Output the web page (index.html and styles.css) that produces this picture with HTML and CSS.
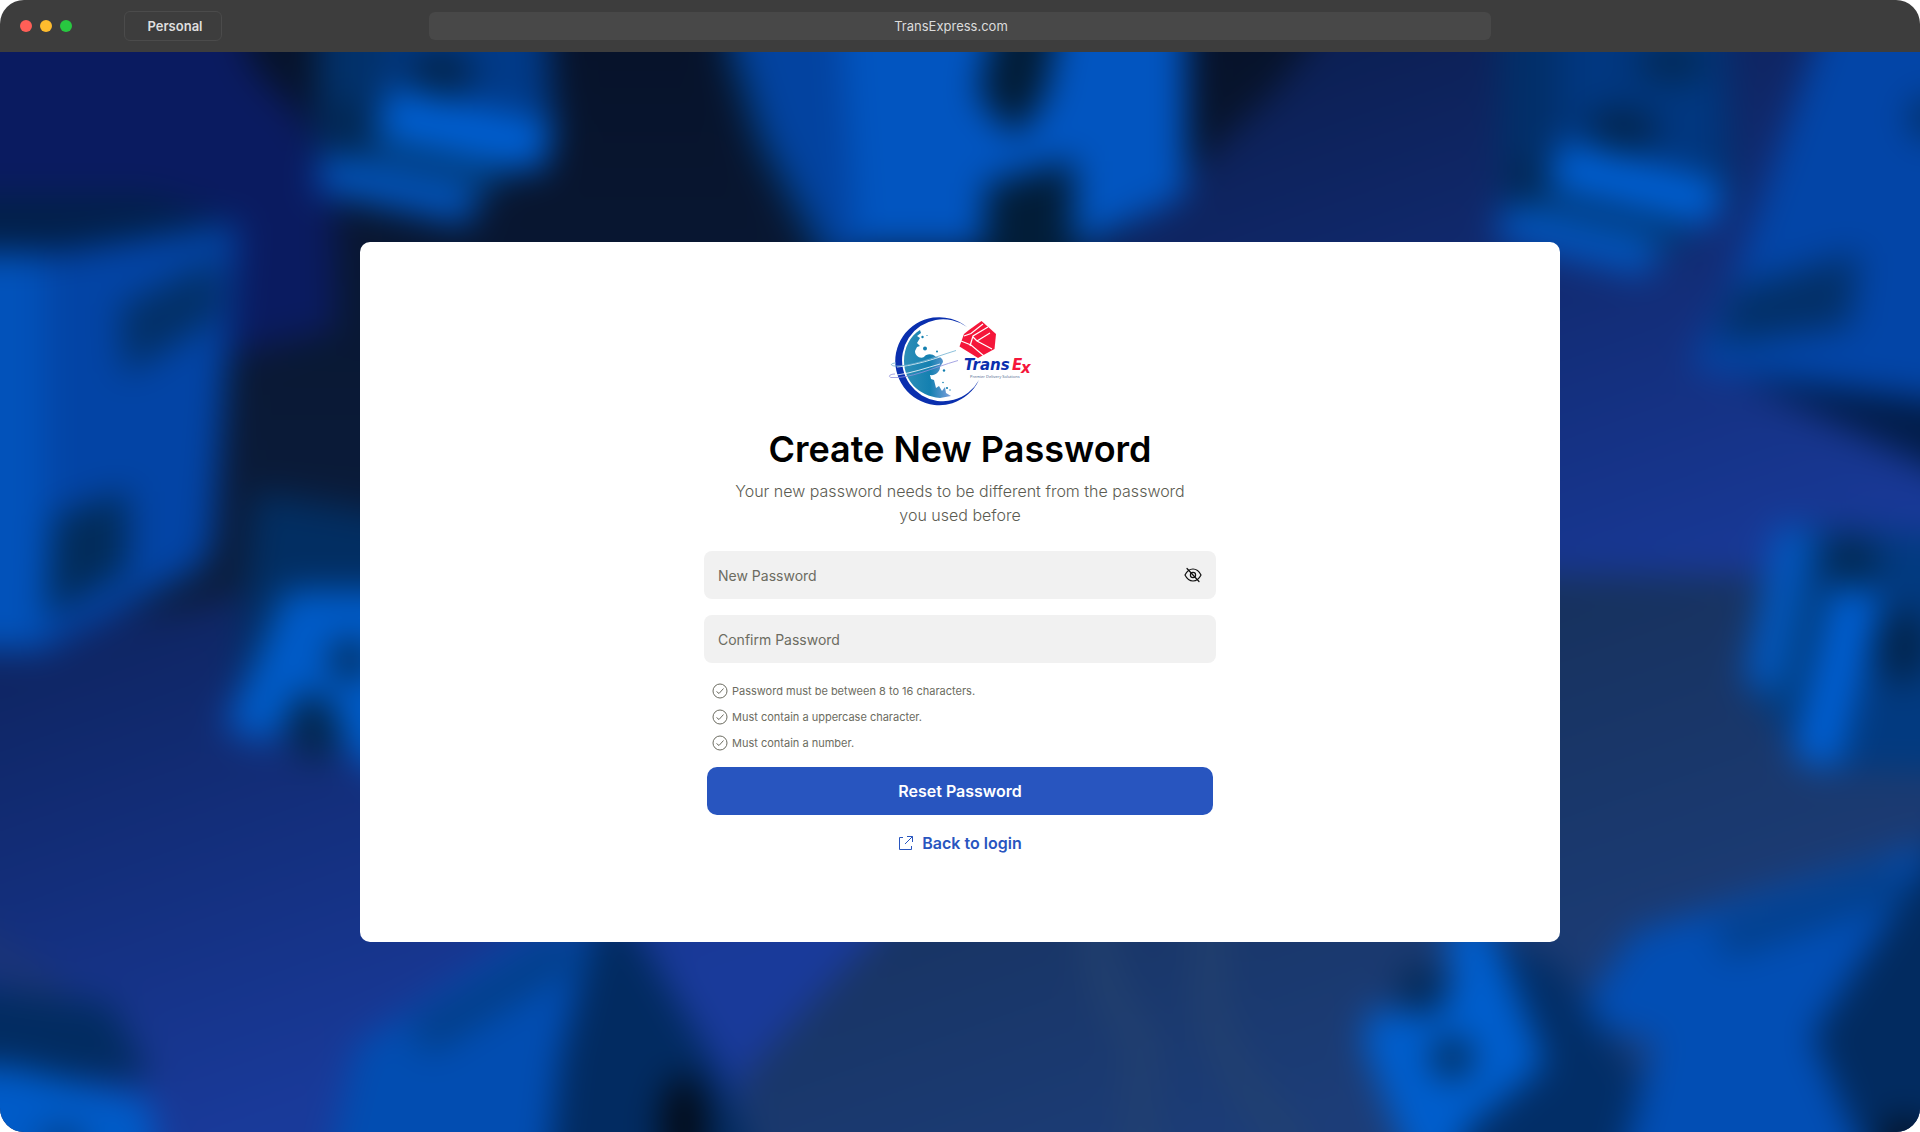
FILE: index.html
```html
<!DOCTYPE html>
<html lang="en">
<head>
    <meta charset="UTF-8">
    <meta name="viewport" content="width=device-width, initial-scale=1.0">
    <title>TransExpress - Create New Password</title>
    <link rel="stylesheet" href="styles.css">
</head>
<body>
    <div class="window">
        <header class="titlebar">
            <div class="titlebar-left">
                <span class="dot dot-red"></span>
                <span class="dot dot-yellow"></span>
                <span class="dot dot-green"></span>
                <button type="button" class="profile">Personal</button>
            </div>
            <div class="address">TransExpress.com</div>
        </header>

        <main class="page">
            <!-- Blurred parcels backdrop -->
            <svg class="backdrop" viewBox="0 52 1920 1080" preserveAspectRatio="xMidYMid slice" aria-hidden="true">
                <defs>
                    <filter id="soft" filterUnits="userSpaceOnUse" x="-100" y="-50" width="2120" height="1282" color-interpolation-filters="sRGB">
                        <feGaussianBlur stdDeviation="17"/>
                    </filter>
                    <linearGradient id="night" gradientUnits="userSpaceOnUse" x1="0" y1="52" x2="0" y2="650">
                        <stop offset="0" stop-color="#07132b"/>
                        <stop offset="1" stop-color="#0c1e3e"/>
                    </linearGradient>
                    <linearGradient id="royal" gradientUnits="userSpaceOnUse" x1="165" y1="470" x2="380" y2="1081">
                        <stop offset="0" stop-color="#0c2055"/>
                        <stop offset="1" stop-color="#193a9a"/>
                    </linearGradient>
                    <linearGradient id="slate" gradientUnits="userSpaceOnUse" x1="360" y1="1026" x2="495" y2="1410">
                        <stop offset="0" stop-color="#17325f"/>
                        <stop offset="1" stop-color="#1c3d78"/>
                    </linearGradient>
                </defs>
                <g filter="url(#soft)">
                    <rect x="-100" y="-50" width="2120" height="1282" fill="url(#night)"/>
                    <path d="M1350 -10L1275 90L1110 250L600 500L180 610L-80 620V1240H2020V-10Z" fill="url(#royal)"/>
                    <path d="M2020 575H1500L1100 700L870 942L740 1080V1240H2020Z" fill="url(#slate)"/>
                    <path d="M-80 -10H225L255 70L305 120L335 200V330L240 352H-80Z" fill="#0a1b60"/>
                    <path d="M1095 900Q1095 990 1140 1040V1240M1210 900V1000Q1220 1070 1300 1150" fill="none" stroke="#24426f" stroke-width="28" opacity=".8"/>
                    <path d="M-40 930L60 1000" stroke="#1b3576" stroke-width="30"/>

                    <!-- left box -->
                    <path d="M-80 195H150L238 222L60 260H-80Z" fill="#02204a"/>
                    <path d="M-80 252H60L238 222L212 545L200 568L45 650H-80Z" fill="#0344a5"/>
                    <path d="M-80 254H30L45 262V650H-80Z" fill="#0252ba"/>
                    <path d="M120 306L220 258V316L124 376Z" fill="#033067"/>
                    <path d="M54 516L128 490V570L46 618Z" fill="#022c5a"/>

                    <!-- top left box -->
                    <path d="M318 0H545L556 130L490 195L318 165Z" fill="#02316a"/>
                    <path d="M390 0H548V120L390 90Z" fill="#013a88"/>
                    <ellipse cx="440" cy="74" rx="34" ry="27" fill="#022650"/>
                    <ellipse cx="350" cy="127" rx="20" ry="28" fill="#022650"/>
                    <path d="M370 147L500 177" stroke="#023e7c" stroke-width="22"/>
                    <path d="M383 112L548 148" stroke="#005fd2" stroke-width="50"/>
                    <path d="M320 173L474 207" stroke="#0254bc" stroke-width="38"/>

                    <!-- top centre box -->
                    <path d="M720 -10H860V260H825L745 100Z" fill="#0343a0"/>
                    <path d="M728 40L760 140L830 270" fill="none" stroke="#022f62" stroke-width="18"/>
                    <path d="M838 -10H1186V195L1080 248H856Z" fill="#0255c0"/>
                    <path d="M1000 -10H1066L1046 95L1016 138L978 96Z" fill="#021d38"/>
                    <path d="M986 184L1074 160V280H982Z" fill="#021d38"/>

                    <!-- top right box -->
                    <path d="M1500 0H1725L1735 200L1660 258L1500 220Z" fill="#022f69"/>
                    <path d="M1560 0H1722V170L1560 140Z" fill="#013780"/>
                    <ellipse cx="1672" cy="62" rx="36" ry="22" fill="#022a58"/>
                    <ellipse cx="1622" cy="130" rx="36" ry="23" fill="#022650"/>
                    <ellipse cx="1529" cy="184" rx="18" ry="25" fill="#022650"/>
                    <path d="M1530 202L1680 242" stroke="#023e7c" stroke-width="20"/>
                    <path d="M1554 164L1718 204" stroke="#005fd2" stroke-width="48"/>
                    <path d="M1500 222L1654 259" stroke="#0254bc" stroke-width="38"/>

                    <!-- right box -->
                    <path d="M1835 -10H2020V420L1690 368L1735 275Z" fill="#0345a7"/>
                    <path d="M1732 290L1860 252L1850 326L1716 346Z" fill="#033068"/>
                    <path d="M1735 375L2020 410V510Z" fill="#021d4a"/>
                    <circle cx="1930" cy="118" r="22" fill="#033068"/>

                    <!-- right middle box -->
                    <path d="M1785 525L2020 540V775L1810 768L1750 690Z" fill="#023a80"/>
                    <circle cx="1851" cy="562" r="28" fill="#022a55"/>
                    <path d="M1812 590L1780 710" stroke="#023e7c" stroke-width="24"/>
                    <ellipse cx="1902" cy="646" rx="28" ry="38" fill="#022650"/>
                    <path d="M1796 528L1762 687" stroke="#0257be" stroke-width="38"/>
                    <path d="M1858 590L1815 764" stroke="#005fd2" stroke-width="46"/>

                    <!-- left middle box -->
                    <path d="M255 492L420 520V760L232 725Z" fill="#022e62"/>
                    <path d="M285 590H420V790L350 756L338 720L300 690L272 744L224 728L260 650Z" fill="#005bc8"/>
                    <ellipse cx="316" cy="728" rx="22" ry="34" fill="#03264c"/>
                    <circle cx="350" cy="660" r="22" fill="#033062"/>

                    <!-- bottom left box -->
                    <path d="M-80 980L110 1004L152 1080H-80Z" fill="#022c61"/>
                    <path d="M-80 1066H10L150 1100L165 1240H-80Z" fill="#005bc8"/>
                    <ellipse cx="62" cy="1145" rx="25" ry="20" fill="#03418c"/>

                    <!-- bottom centre box -->
                    <path d="M310 1240L356 1045L540 930H610L540 1240Z" fill="#024db1"/>
                    <path d="M418 1040L570 948" stroke="#033e88" stroke-width="36"/>
                    <path d="M600 900L635 930L722 1076L790 1240H540L560 1060Z" fill="#022b61"/>
                    <ellipse cx="684" cy="1125" rx="24" ry="50" fill="#030c1a"/>

                    <!-- bottom right letter box -->
                    <path d="M1480 930L1560 965L1640 1080V1240H1440Z" fill="#022e67"/>
                    <path d="M1445 920H1488L1545 1065L1465 1130L1440 1240L1362 1040L1372 1008L1435 1016L1452 985Z" fill="#005ecd"/>
                    <circle cx="1422" cy="990" r="25" fill="#032a58"/>
                    <circle cx="1452" cy="1058" r="22" fill="#033062"/>

                    <!-- bottom right box -->
                    <path d="M1635 932L1920 848L2020 830V1240H1600L1655 1040L1605 1030L1585 1005Z" fill="#024eb4"/>
                    <path d="M1720 942L1900 880" stroke="#033f8a" stroke-width="36"/>
                    <path d="M2020 720L1920 872L1812 1036L1900 1240H2020Z" fill="#022b60"/>
                    <ellipse cx="1905" cy="1140" rx="25" ry="22" fill="#031226"/>
                </g>
            </svg>

            <section class="card">
                <svg class="logo" viewBox="17 14 146 94" role="img" aria-label="TransEx Premier Delivery Solutions">
                    <defs>
                        <linearGradient id="globe" x1="0" y1="0" x2="1" y2="0">
                            <stop offset="0" stop-color="#2e8fb8"/>
                            <stop offset=".55" stop-color="#1480b0"/>
                            <stop offset="1" stop-color="#7c9fdc"/>
                        </linearGradient>
                    </defs>
                    <path d="M97 27A44 44 0 1 0 109 80A41 41 0 1 1 97 27Z" fill="#0a2fae"/>
                    <path d="M50 30C40 36 34 48 34 61C34 80 48 96 70 98L81 96L76 93L75 87L72 91L69 86L66 88L64 80L61 79L60 75C65 76 70 72 70 67L73 62C73 58 69 56 66 57C62 53 56 54 54 57C50 59 45 56 45 51L47 47L50 46L47 43L50 38L47 36L51 33Z" fill="url(#globe)"/>
                    <g fill="#1480b0">
                        <circle cx="55" cy="48.500" r="2"/>
                        <circle cx="52.500" cy="37" r="1.200"/>
                        <circle cx="57" cy="35.500" r=".6"/>
                        <circle cx="67" cy="51.500" r="1"/>
                        <circle cx="74" cy="70.500" r="1.200"/>
                        <circle cx="73" cy="82.500" r=".8"/>
                        <circle cx="77" cy="88" r="1.100"/>
                        <circle cx="80" cy="90" r=".7"/>
                    </g>
                    <path d="M27 67C40 66 58 61 70 57M27 75C42 73 56 68 70 64" fill="none" stroke="#fff" stroke-width=".8"/>
                    <path d="M86 50.500C62 58 40 67 24 66C19 65 22 63 26 63" fill="none" stroke="#6fb0d0" stroke-width=".8"/>
                    <path d="M88 60.500C62 68 40 79 21 77.500C17 76 21 74 25 74" fill="none" stroke="#8f8fdc" stroke-width=".8"/>
                    <path d="M111.500 21L126 34L124.500 49L108 58L89.500 46.500L94 34L99 30Z" fill="#f5163a"/>
                    <path d="M94 36L101 33.500L113 24M100 46L103 36L118 27M103 37L107 41L122 49M91 41L101 45L114 56M107 41L120 33" fill="none" stroke="#fff" stroke-width="1.200"/>
                    <text class="logo-name" x="94" y="70">Trans</text>
                    <text class="logo-name logo-red" x="142" y="70">E</text>
                    <text class="logo-name logo-red" x="151" y="73">x</text>
                    <text class="logo-tagline" x="100" y="78">Premier Delivery Solutions</text>
                </svg>

                <h1>Create New Password</h1>
                <p class="subtitle">Your new password needs to be different from the password you used before</p>

                <form class="reset-form" id="resetForm">
                    <div class="field">
                        <input type="password" id="newPassword" placeholder="New Password" aria-label="New Password">
                        <button type="button" class="toggle" aria-label="Show password">
                            <svg viewBox="0 0 18 16" width="18" height="16" fill="none" stroke="#111" stroke-width="1.200" stroke-linecap="round">
                                <path d="M1 8C3 4 6 2 9 2S15 4 17 8C15 12 12 14 9 14S3 12 1 8Z"/>
                                <circle cx="9" cy="8" r="2.600"/>
                                <path d="M3 1.500L15 14.500"/>
                            </svg>
                        </button>
                    </div>
                    <div class="field">
                        <input type="password" id="confirmPassword" placeholder="Confirm Password" aria-label="Confirm Password">
                    </div>

                    <ul class="rules">
                        <li>
                            <svg class="check" viewBox="0 0 16 16"><circle cx="8" cy="8" r="7"/><path d="M4.500 8.500L7 10.500L11.500 5.500"/></svg>
                            Password must be between 8 to 16 characters.
                        </li>
                        <li>
                            <svg class="check" viewBox="0 0 16 16"><circle cx="8" cy="8" r="7"/><path d="M4.500 8.500L7 10.500L11.500 5.500"/></svg>
                            Must contain a uppercase character.
                        </li>
                        <li>
                            <svg class="check" viewBox="0 0 16 16"><circle cx="8" cy="8" r="7"/><path d="M4.500 8.500L7 10.500L11.500 5.500"/></svg>
                            Must contain a number.
                        </li>
                    </ul>

                    <button type="submit" class="btn">Reset Password</button>
                </form>

                <a class="back-link" href="#">
                    <svg viewBox="0 0 16 16" width="16" height="16" fill="none" stroke="#2855bf" stroke-width="1">
                        <path d="M5 2.500H1.500V14.500H13.500V11M9 1.500H14.500V7M14.500 1.500L7 9"/>
                    </svg>
                    Back to login
                </a>
            </section>
        </main>
    </div>
</body>
</html>
```
FILE: styles.css
```css
* {
    margin: 0;
    padding: 0;
    box-sizing: border-box;
}

body {
    font-family: Inter, 'Liberation Sans', sans-serif;
    background: white;
}

.window {
    display: flex;
    flex-direction: column;
    min-height: 100vh;
    border-radius: 24px;
    overflow: hidden;
}

.titlebar {
    display: grid;
    grid-template-columns: 429px 1fr 429px;
    align-items: center;
    height: 52px;
    background: #3d3d3d;
}

.titlebar-left {
    display: flex;
    align-items: center;
    gap: 8px;
    padding-left: 20px;
}

.dot {
    width: 12px;
    height: 12px;
    border-radius: 50%;
}

.dot-red {
    background: #ff5f57;
}

.dot-yellow {
    background: #febc2e;
}

.dot-green {
    background: #28c840;
}

.profile {
    width: 98px;
    height: 30px;
    margin-left: 44px;
    padding-left: 4px;
    background: none;
    border: 1px solid #4b4b4b;
    border-radius: 6px;
    color: #dfdfdf;
    font-family: inherit;
    font-size: 13px;
    font-weight: 600;
}

.address {
    height: 28px;
    padding-right: 18px;
    background: #484848;
    border-radius: 6px;
    color: #dcdcdc;
    font-size: 13px;
    line-height: 28px;
    text-align: center;
}

.page {
    position: relative;
    flex: 1;
    display: flex;
    align-items: center;
    justify-content: center;
    padding: 40px 20px;
    background: #0c2055;
}

.backdrop {
    position: absolute;
    inset: 0;
    width: 100%;
    height: 100%;
}

.card {
    position: relative;
    display: flex;
    flex-direction: column;
    align-items: center;
    width: 100%;
    max-width: 1200px;
    min-height: 700px;
    padding: 72px 24px;
    background: white;
    border-radius: 10px;
}

.logo {
    width: 146px;
    height: 94px;
}

.logo-name {
    font-family: 'DejaVu Sans', sans-serif;
    font-size: 15px;
    font-weight: bold;
    font-style: italic;
    fill: #0a2fae;
}

.logo-red {
    fill: #f5163a;
}

.logo-tagline {
    font-family: 'Noto Sans', sans-serif;
    font-size: 4px;
    fill: #4f6a92;
}

h1 {
    margin-top: 19px;
    font-size: 36px;
    font-weight: 600;
    line-height: 44px;
    color: black;
}

.subtitle {
    max-width: 460px;
    margin-top: 8px;
    font-size: 16px;
    font-weight: 300;
    line-height: 24px;
    text-align: center;
    color: #5c5c52;
}

.reset-form {
    display: flex;
    flex-direction: column;
    width: 100%;
    max-width: 512px;
    margin-top: 24px;
    gap: 16px;
}

.field {
    display: flex;
    align-items: center;
    height: 48px;
    padding: 0 14px;
    background: #f1f1f1;
    border-radius: 8px;
}

.field input {
    flex: 1;
    height: 100%;
    background: none;
    border: none;
    outline: none;
    font-family: inherit;
    font-size: 14px;
    color: #222;
}

.field input::placeholder {
    color: #6c6c61;
}

.toggle {
    display: flex;
    background: none;
    border: none;
    cursor: pointer;
}

.rules {
    display: flex;
    flex-direction: column;
    gap: 10px;
    padding: 4px 8px 0;
    list-style: none;
}

.rules li {
    display: flex;
    align-items: center;
    gap: 4px;
    font-size: 11px;
    line-height: 16px;
    color: #6c6c61;
}

.check {
    width: 16px;
    height: 16px;
    fill: none;
    stroke: #6c6c61;
    stroke-width: 1;
}

.btn {
    height: 48px;
    margin: 0 3px;
    background: #2855bf;
    color: white;
    border: none;
    border-radius: 10px;
    font-family: inherit;
    font-size: 16px;
    font-weight: 600;
    cursor: pointer;
}

.back-link {
    display: flex;
    align-items: center;
    gap: 8px;
    margin-top: 16px;
    font-size: 16px;
    font-weight: 600;
    line-height: 24px;
    color: #2855bf;
    text-decoration: none;
}
```
